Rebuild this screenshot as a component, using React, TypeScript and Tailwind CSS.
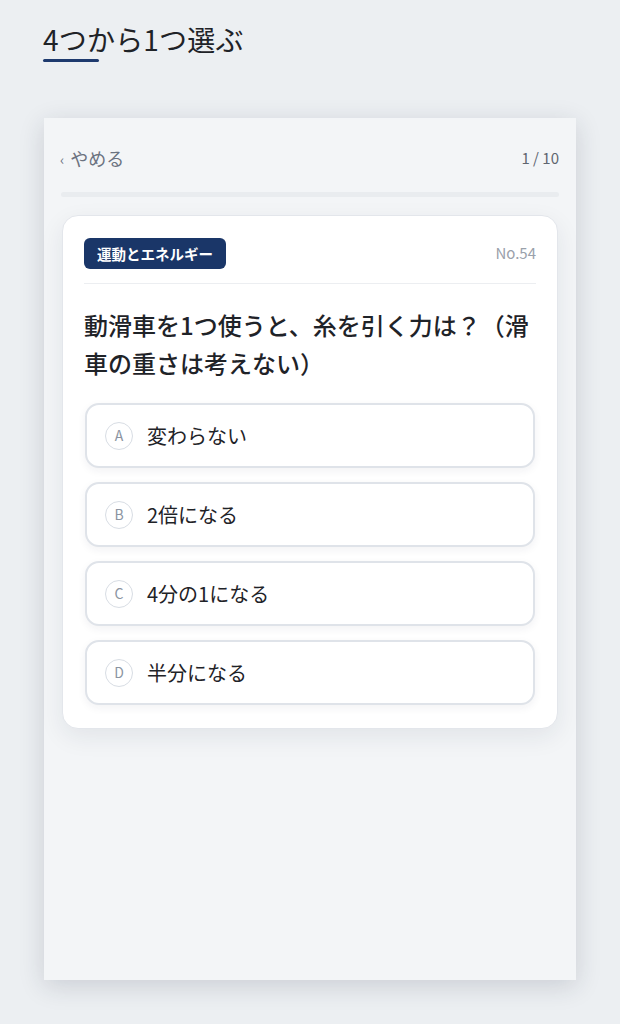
import React from "react";

const options = [
  { k: "A", t: "変わらない" },
  { k: "B", t: "2倍になる" },
  { k: "C", t: "4分の1になる" },
  { k: "D", t: "半分になる" },
];

export default function App() {
  return (
    <div
      className="w-[620px] h-[1024px] bg-[#eceff2] overflow-hidden"
      style={{ fontFamily: '"Noto Sans CJK JP", "Noto Sans", sans-serif' }}
    >
      <div className="pl-[43px] pt-[21px]">
        <h1 className="text-[28px] leading-[36px] font-normal text-[#1f2328] tracking-[0.2px]">
          4つから1つ選ぶ
        </h1>
        <div className="mt-[2px] w-[56px] h-[3px] bg-[#1e3a6e] rounded-full" />
      </div>

      <div className="ml-[44px] mt-[56px] w-[532px] h-[862px] bg-[#f3f5f7] shadow-[0_6px_24px_rgba(30,40,60,0.16)]">
        <div className="flex items-center justify-between pl-[16px] pr-[17px] pt-[28px] h-[52px]">
          <div className="flex items-center text-[#6b7280]">
            <span className="text-[14px] mr-[6px] mt-[2px]">‹</span>
            <span className="text-[18px] leading-[24px]">やめる</span>
          </div>
          <span className="text-[15px] leading-[24px] text-[#5f6670]">1 / 10</span>
        </div>
        <div className="mx-[17px] mt-[22px] h-[5px] rounded-full bg-[#e9ecef]" />

        <div className="mx-[18px] mt-[18px] bg-white rounded-[16px] border border-[#e3e6eb] shadow-[0_8px_24px_rgba(30,40,60,0.08)] px-[21px] pt-[22px] pb-[23px]">
          <div className="flex items-center justify-between">
            <span className="inline-flex items-center h-[31px] px-[13px] rounded-[6px] bg-[#1a3668] text-white text-[14.5px] font-bold">
              運動とエネルギー
            </span>
            <span className="text-[15px] text-[#9aa1ab]">No.54</span>
          </div>
          <div className="mt-[14px] h-px bg-[#eceef1]" />
          <p className="mt-[22px] text-[24px] leading-[38px] font-medium text-[#1f2328]">
            動滑車を1つ使うと、糸を引く力は？（滑車の重さは考えない）
          </p>
          <div className="mt-[21px] flex flex-col gap-[14px]">
            {options.map((o) => (
              <div
                key={o.k}
                className="mx-px h-[65px] flex items-center rounded-[14px] border-2 border-[#dfe3e9] bg-white shadow-[0_3px_8px_rgba(30,40,60,0.06)] pl-[18px]"
              >
                <span className="w-[28px] h-[28px] rounded-full border border-[#d8dde4] flex items-center justify-center text-[14px] text-[#8b94a1]">
                  {o.k}
                </span>
                <span className="ml-[14px] text-[20px] text-[#1f2328]">{o.t}</span>
              </div>
            ))}
          </div>
        </div>
      </div>
    </div>
  );
}
